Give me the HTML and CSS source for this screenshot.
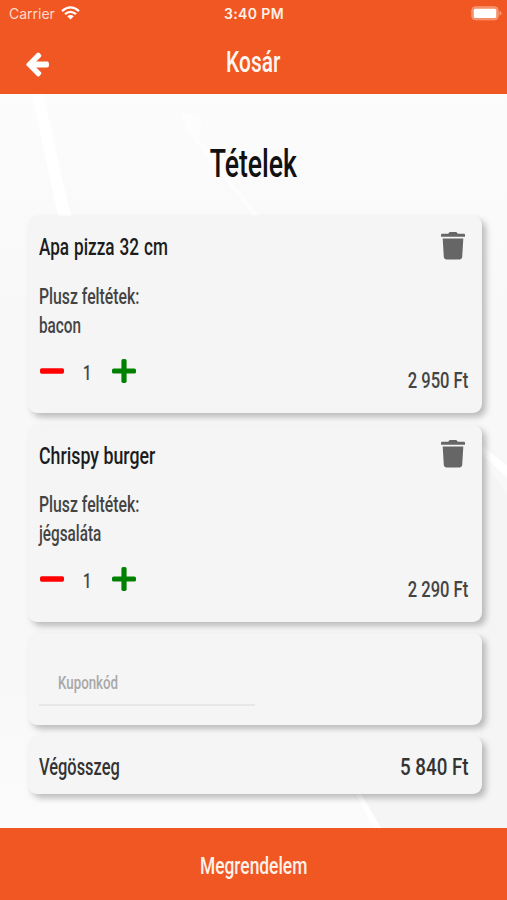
FILE: index.html
```html
<!DOCTYPE html>
<html lang="hu">
<head>
<meta charset="utf-8">
<title>Kosár</title>
<link rel="stylesheet" href="styles.css">
</head>
<body>
<svg class="symbols" width="0" height="0" aria-hidden="true">
  <symbol id="trash" viewBox="0 0 24 28"><path d="M1 1.7H7.2L8.1.6Q8.5.1 9.1.1H14.9Q15.5.1 15.9.6L16.8 1.7H23Q24 1.7 24 2.7V4.2Q24 4.8 23.4 4.8H.6Q0 4.8 0 4.2V2.7Q0 1.7 1 1.7ZM1.7 6.5H22.3L21.2 25.1Q21 27.5 18.7 27.5H5.3Q3 27.5 2.8 25.1Z"/></symbol>
  <symbol id="minus" viewBox="0 0 24 24"><rect y="9.2" width="24" height="5.6" rx="1.7"/></symbol>
  <symbol id="plus" viewBox="0 0 24 24"><rect y="9.4" width="24" height="5.2" rx="1.7"/><rect x="9.4" width="5.2" height="24" rx="1.7"/></symbol>
</svg>
<div class="screen">
  <header class="header">
    <div class="status">
      <div class="carrier"><span>Carrier</span>
        <svg width="19" height="14" viewBox="0 0 19 14" fill="none" stroke="#fff" stroke-width="2.3"><path d="M1 5.1Q9.5-2.4 18 5.1M4 8.2Q9.5 3.6 15 8.2"/><path d="M6.2 10.2Q9.5 7.7 12.8 10.2L9.5 13.6Z" fill="#fff" stroke="none"/></svg>
      </div>
      <div class="time">3:40 PM</div>
      <svg class="battery" width="31" height="15" viewBox="0 0 31 15"><rect x=".8" y=".8" width="26.4" height="13" rx="3.6" fill="#f58c67" stroke="#f79b7b"/><rect x="2.8" y="2.7" width="22.4" height="9.2" rx="1.5" fill="#fff"/><path d="M28.5 5Q30.5 5.6 30.5 7.3T28.5 9.6Z" fill="#f79b7b"/></svg>
    </div>
    <div class="nav">
      <svg width="24" height="25" viewBox="0 0 24 25" fill="#fff"><path d="M.9 11.2 11 1.1Q12.2 0 13.4 1.1L14.8 2.5Q15.9 3.7 14.8 4.9L10.2 9.6H21.3Q22.9 9.6 22.9 11.2V13.8Q22.9 15.4 21.3 15.4H10.2L14.8 20.1Q15.9 21.3 14.8 22.5L13.4 23.9Q12.2 25 11 23.9L.9 13.8Q-.3 12.5 .9 11.2Z"/></svg>
      <h1><span class="t t-nav">Kosár</span></h1>
    </div>
  </header>
  <main class="content">
    <svg class="streaks" width="507" height="734" viewBox="0 0 507 734" aria-hidden="true">
      <path class="shade" d="M345 690 380 734H507V400L480 360V690Z"/>
      <g fill="#fff"><path d="M32 0H43L71 122H58Z"/><path d="M180 18 202 24 198 45 259 122H253L190 40Z" opacity=".6"/><path d="M480 350 507 372V384L482 360Z"/><path d="M347 686H353L381 734H374Z"/></g>
    </svg>
    <h2><span class="t t-heading">Tételek</span></h2>
    <section class="cards">
      <article class="card">
        <div class="row"><h3><span class="t t-name1">Apa pizza 32 cm</span></h3><svg class="trash"><use href="#trash"/></svg></div>
        <div class="extras"><div><span class="t t-extra">Plusz feltétek:</span></div><div><span class="t t-extra-item">bacon</span></div></div>
        <div class="row">
          <div class="qty"><svg class="minus"><use href="#minus"/></svg><div class="count"><span class="t">1</span></div><svg class="plus"><use href="#plus"/></svg></div>
          <div class="price"><span class="t t-price">2 950 Ft</span></div>
        </div>
      </article>
      <article class="card">
        <div class="row"><h3><span class="t t-name2">Chrispy burger</span></h3><svg class="trash"><use href="#trash"/></svg></div>
        <div class="extras"><div><span class="t t-extra">Plusz feltétek:</span></div><div><span class="t t-extra-item">jégsaláta</span></div></div>
        <div class="row">
          <div class="qty"><svg class="minus"><use href="#minus"/></svg><div class="count"><span class="t">1</span></div><svg class="plus"><use href="#plus"/></svg></div>
          <div class="price"><span class="t t-price">2 290 Ft</span></div>
        </div>
      </article>
      <div class="card coupon"><div class="field"><span class="t t-coupon">Kuponkód</span></div></div>
      <div class="card total"><span class="t t-total">Végösszeg</span><span class="t t-sum">5 840 Ft</span></div>
    </section>
  </main>
  <footer class="order"><span class="t t-order">Megrendelem</span></footer>
</div>
</body>
</html>
```
FILE: styles.css
```css
* { box-sizing: border-box; }
body { margin: 0; font-family: Roboto, "Liberation Sans", sans-serif; font-weight: 500; color: #444; }
h1, h2, h3 { margin: 0; font-weight: 500; }
svg { display: block; flex: none; }
.symbols { position: absolute; }
.screen { width: 507px; height: 900px; display: flex; flex-direction: column; overflow: hidden; }

/* Condensed lettering */
.t { display: inline-block; white-space: nowrap; transform: scaleX(.7); transform-origin: left center; }
.t-nav, .t-heading, .t-order { transform-origin: center; }
.t-price, .t-sum { transform-origin: right center; }
.t-nav { transform: scaleX(.71); }
.t-heading { transform: scaleX(.7); }
.t-name1 { transform: scaleX(.7); word-spacing: 1px; }
.t-name2 { transform: scaleX(.725); }
.t-extra { transform: scaleX(.7); }
.t-extra-item { transform: scaleX(.68); }
.t-price { transform: scaleX(.735); }
.t-total { transform: scaleX(.67); }
.t-order { transform: scaleX(.71); }
.t-sum { transform: scaleX(.765); }

.header { height: 94px; flex: none; background: #f15722; color: #fff; }
.status { height: 30px; display: grid; grid-template-columns: 1fr auto 1fr; padding: 0 5px 2px 9px; align-items: center; font: 14px/28px Inter, sans-serif; }
.carrier { display: flex; align-items: center; gap: 6px; color: #ffdacb; }
.carrier svg { margin-top: -3px; }
.time { font-weight: 600; letter-spacing: .4px; margin-left: -3px; color: #fff0e9; }
.battery { justify-self: end; margin-top: -1px; }
.nav { height: 64px; display: grid; grid-template-columns: 1fr auto 1fr; align-items: center; padding: 0 26px; }
.nav svg { margin-top: 4px; }
.nav h1 { font-size: 29.5px; line-height: 40px; color: #fff6f1; }

.content { flex: 1; position: relative; background: linear-gradient(#fcfcfc, #f8f8f8 30%, #f8f8f8 80%, #fbfbfb); }
.streaks { position: absolute; inset: 0; }
.shade { fill: #f5f5f5; }
h2 { position: relative; padding-top: 45px; height: 122px; line-height: 51px; font-size: 38px; text-align: center; color: #111; }
.cards { position: relative; display: flex; flex-direction: column; gap: 11.5px; padding: 0 25px 0 27.5px; }
.card { height: 197px; padding: 11px 14px 0 11px; background: #f5f5f5; border-radius: 9px; box-shadow: 4px 4px 6px rgba(0, 0, 0, .25); }
.row { display: flex; justify-content: space-between; align-items: flex-start; }
h3 { font-size: 24.5px; line-height: 40px; color: #1c1c1c; }
.trash { width: 24px; height: 28px; margin: 4.5px 3px 0 0; fill: #666; }
.extras { margin-top: 14.5px; font-size: 22.5px; line-height: 29px; }
.qty { display: flex; align-items: center; height: 30px; margin-top: 16px; padding-left: 1px; }
.minus, .plus { width: 24px; height: 24px; }
.minus { fill: red; }
.plus { fill: green; }
.count { width: 48px; padding-left: 19px; padding-top: 4px; font-size: 21px; line-height: 24px; }
.price { margin-top: 25.5px; font-size: 22.5px; line-height: 30px; }
.coupon { height: 91.5px; padding-top: 12px; }
.field { width: 216px; height: 61px; padding: 23px 0 0 19px; border-bottom: 2px solid #e7e7e7; font-size: 19px; line-height: 30px; color: #a8a8a8; }
.total { height: 58px; display: flex; justify-content: space-between; padding-right: 13px; font-size: 24.5px; line-height: 40px; color: #333; }
.order { height: 72px; flex: none; background: #f15722; color: #fff1e9; text-align: center; padding-top: 3px; font-size: 24.5px; line-height: 70px; }
```
